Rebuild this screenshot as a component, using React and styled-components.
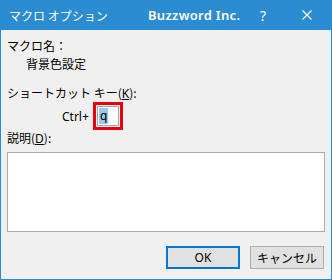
import React from "react";
import styled, { createGlobalStyle } from "styled-components";

const Global = createGlobalStyle`
  html, body { margin: 0; padding: 0; background: #f0f0f0; }
  body { font-family: "Noto Sans", "Noto Sans CJK JP", sans-serif; }
`;

const Win = styled.div`
  width: 332px;
  height: 280px;
  box-sizing: border-box;
  display: flex;
  flex-direction: column;
  background: #f0f0f0;
  border: 1px solid #2b8cd1;
  border-top: none;
  font-size: 12px;
  color: #000;
`;

const TitleBar = styled.div`
  height: 30px;
  margin: 0 -1px;
  background: #2b8cd1;
  color: #fff;
  display: flex;
  align-items: center;
  padding-left: 9px;
  box-sizing: border-box;
`;

const TitleText = styled.span`
  font-family: "Noto Sans CJK JP", sans-serif;
  font-size: 12px;
  width: 139px;
  flex-shrink: 0;
`;

const Brand = styled.span`
  font-family: "Noto Sans", sans-serif;
  font-weight: 600;
  font-size: 13px;
  letter-spacing: 0.3px;
  width: 112px;
  flex-shrink: 0;
`;

const Help = styled.span`
  font-family: "Noto Sans", sans-serif;
  font-size: 14px;
  width: 42px;
  flex-shrink: 0;
`;

const Close = styled.span`
  display: flex;
  width: 10px;
  height: 10px;
  flex-shrink: 0;
  svg { display: block; }
`;

const Body = styled.div`
  flex: 1;
  display: flex;
  flex-direction: column;
  padding: 8px 6px 0 6px;
`;

const Label = styled.div`
  line-height: 16px;
  height: 16px;
  margin-top: ${(p) => p.$mt || 0}px;
  margin-left: ${(p) => p.$ml || 0}px;
  font-family: "Noto Sans CJK JP", sans-serif;
  white-space: nowrap;
`;

const Key = styled.span`
  text-decoration: underline;
  text-underline-offset: 1px;
  font-family: "Noto Sans", sans-serif;
`;

const ShortcutRow = styled.div`
  display: flex;
  align-items: center;
  margin-top: 1px;
  padding-left: 55px;
  height: 28px;
`;

const Ctrl = styled.span`
  font-family: "Noto Sans", sans-serif;
  font-size: 12px;
  margin-right: 2px;
  width: 29px;
`;

const Highlight = styled.div`
  border: 3px solid #e8000d;
  padding: 1px;
  display: flex;
`;

const KeyInput = styled.div`
  width: 22px;
  height: 20px;
  box-sizing: border-box;
  border: 1px solid #a9a9a9;
  background: #fff;
  display: flex;
  align-items: center;
  padding-left: 1px;
`;

const Selected = styled.span`
  background: #99c9ef;
  font-family: "Noto Sans", sans-serif;
  font-size: 12px;
  line-height: 16px;
  padding: 0 1px;
`;

const TextArea = styled.div`
  margin-top: 6px;
  height: 80px;
  box-sizing: border-box;
  border: 1px solid #acacac;
  background: #fff;
`;

const Buttons = styled.div`
  display: flex;
  justify-content: flex-end;
  gap: 10px;
  margin-top: 14px;
  padding-right: 1px;
`;

const Button = styled.div`
  width: 74px;
  height: 23px;
  box-sizing: border-box;
  background: #e1e1e1;
  border: ${(p) => (p.$primary ? "2px solid #0078d7" : "1px solid #adadad")};
  display: flex;
  align-items: center;
  justify-content: center;
  font-family: "Noto Sans", "Noto Sans CJK JP", sans-serif;
  font-size: 12px;
`;

export default function App() {
  return (
    <>
      <Global />
      <Win>
        <TitleBar>
          <TitleText>マクロ オプション</TitleText>
          <Brand>Buzzword Inc.</Brand>
          <Help>?</Help>
          <Close>
            <svg width="10" height="10" viewBox="0 0 10 10">
              <path d="M0.5 0.5L9.5 9.5M9.5 0.5L0.5 9.5" stroke="#ffffff" strokeWidth="1.2" fill="none" />
            </svg>
          </Close>
        </TitleBar>
        <Body>
          <Label>マクロ名：</Label>
          <Label $mt={2} $ml={19}>背景色設定</Label>
          <Label $mt={13}>
            ショートカット キー(<Key>K</Key>):
          </Label>
          <ShortcutRow>
            <Ctrl>Ctrl+</Ctrl>
            <Highlight>
              <KeyInput>
                <Selected>q</Selected>
              </KeyInput>
            </Highlight>
          </ShortcutRow>
          <Label>
            説明(<Key>D</Key>):
          </Label>
          <TextArea />
          <Buttons>
            <Button $primary>OK</Button>
            <Button>キャンセル</Button>
          </Buttons>
        </Body>
      </Win>
    </>
  );
}
